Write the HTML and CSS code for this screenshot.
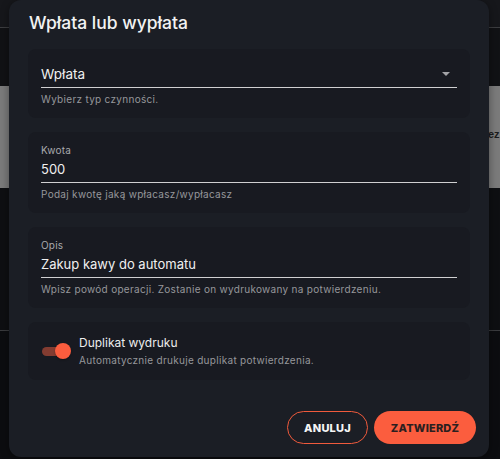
FILE: index.html
```html
<!DOCTYPE html>
<html lang="pl">
<head>
<meta charset="utf-8">
<title>Wpłata lub wypłata</title>
<link rel="stylesheet" href="styles.css">
</head>
<body>
<div class="backdrop">
  <div class="bg-header"></div>
  <div class="bg-gap"></div>
  <div class="bg-band"><span class="bg-text">ez</span></div>
  <div class="bg-mid"></div>
  <div class="bg-low"></div>
</div>

<div class="dialog" role="dialog" aria-labelledby="dlg-title">
  <h2 class="dialog-title" id="dlg-title">Wpłata lub wypłata</h2>

  <div class="cards">
    <div class="card">
      <div class="field-input field-select">
        <span class="field-value">Wpłata</span>
        <span class="select-arrow"></span>
      </div>
      <div class="field-helper">Wybierz typ czynności.</div>
    </div>

    <div class="card">
      <div class="field-label">Kwota</div>
      <div class="field-input"><span class="field-value">500</span></div>
      <div class="field-helper">Podaj kwotę jaką wpłacasz/wypłacasz</div>
    </div>

    <div class="card">
      <div class="field-label">Opis</div>
      <div class="field-input"><span class="field-value">Zakup kawy do automatu</span></div>
      <div class="field-helper">Wpisz powód operacji. Zostanie on wydrukowany na potwierdzeniu.</div>
    </div>

    <div class="card card-toggle">
      <div class="toggle">
        <span class="toggle-track"></span>
        <span class="toggle-thumb"></span>
      </div>
      <div class="toggle-text">
        <div class="toggle-title">Duplikat wydruku</div>
        <div class="toggle-sub">Automatycznie drukuje duplikat potwierdzenia.</div>
      </div>
    </div>
  </div>

  <div class="actions">
    <button class="btn btn-outline">ANULUJ</button>
    <button class="btn btn-filled">ZATWIERDŹ</button>
  </div>
</div>
</body>
</html>
```

FILE: styles.css
```css
* { box-sizing: border-box; }

html, body {
  margin: 0;
  padding: 0;
  width: 500px;
  height: 459px;
  overflow: hidden;
  background: #0f1013;
  font-family: "Inter", "Noto Sans", sans-serif;
}

.backdrop {
  display: flex;
  flex-direction: column;
  height: 459px;
}
.bg-header {
  height: 28px;
  background: #16171b;
  border-bottom: 1px solid #3c3d40;
}
.bg-gap {
  height: 58px;
  background: #111215;
}
.bg-band {
  height: 102px;
  background: #7b7b7b;
  position: relative;
}
.bg-text {
  position: absolute;
  left: 488px;
  top: 42px;
  font-weight: 700;
  font-size: 11px;
  color: #1c1c1c;
  font-family: "Liberation Sans", sans-serif;
}
.bg-mid {
  height: 143px;
  background: #0e0f12;
  border-bottom: 1px solid #3a3b3e;
}
.bg-low {
  flex: 1;
  background: #0c0d10;
}

.dialog {
  position: absolute;
  left: 9px;
  top: 0;
  width: 480px;
  height: 457px;
  background: #1b1e25;
  border-radius: 12px;
  padding: 11px 13px 13px 19px;
  display: flex;
  flex-direction: column;
  box-shadow: 0 2px 8px rgba(0,0,0,0.4);
}

.dialog-title {
  margin: 0 0 14px 1px;
  font-size: 17.5px;
  line-height: 24px;
  font-weight: 500;
  color: #f2f2f2;
}

.cards {
  display: flex;
  flex-direction: column;
  gap: 14px;
  width: 442px;
}

.card {
  background: #181a21;
  border-radius: 8px;
  padding: 12px 13px 12px 13px;
}

.field-label {
  font-size: 10px;
  line-height: 12px;
  color: #a8a9ad;
  letter-spacing: 0.2px;
}

.field-input {
  height: 27px;
  border-bottom: 1px solid #d0d0d2;
  display: flex;
  align-items: center;
  justify-content: space-between;
}
.field-value {
  font-size: 13px;
  color: #f0f0f0;
}
.field-select .field-value { font-size: 13.5px; }

.select-arrow {
  width: 0;
  height: 0;
  border-left: 4px solid transparent;
  border-right: 4px solid transparent;
  border-top: 4px solid #a3a4a8;
  margin-right: 7px;
}

.field-helper {
  margin-top: 4px;
  font-size: 10px;
  line-height: 14px;
  color: #96979b;
  letter-spacing: 0.3px;
}

.card-toggle {
  display: flex;
  align-items: center;
  gap: 8px;
  padding: 12px 13px 12px 14px;
}

.toggle {
  position: relative;
  width: 29px;
  height: 16px;
  flex: none;
}
.toggle-track {
  position: absolute;
  left: 0;
  top: 4px;
  width: 26px;
  height: 9px;
  border-radius: 5px;
  background: #833c31;
}
.toggle-thumb {
  position: absolute;
  right: 0;
  top: 0;
  width: 16px;
  height: 16px;
  border-radius: 50%;
  background: #fb5d3e;
  box-shadow: 0 1px 2px rgba(0,0,0,0.3);
}

.toggle-title {
  font-size: 12px;
  line-height: 18px;
  color: #ededed;
}
.toggle-sub {
  font-size: 10px;
  line-height: 16px;
  color: #96979b;
  letter-spacing: 0.3px;
}

.actions {
  margin-top: auto;
  display: flex;
  justify-content: flex-end;
  gap: 6px;
}

.btn {
  height: 33px;
  border-radius: 17px;
  font-family: "Inter", sans-serif;
  font-size: 11px;
  font-weight: 800;
  letter-spacing: 0.2px;
  cursor: pointer;
}
.btn-outline {
  width: 81px;
  background: transparent;
  border: 1px solid #f05a3c;
  color: #f5f5f5;
}
.btn-filled {
  width: 102px;
  background: #fb5d3e;
  border: none;
  color: #2b1f20;
}
```
